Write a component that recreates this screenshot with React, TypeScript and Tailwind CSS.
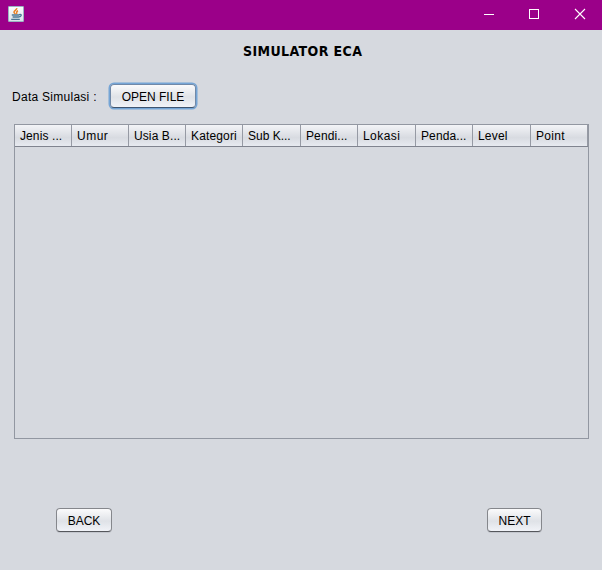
import React from "react";

const columns = [
  { label: "Jenis ...", style: "w-[57px] tracking-[0.1px]" },
  { label: "Umur", style: "w-[57px] tracking-[0.5px]" },
  { label: "Usia B...", style: "w-[57px] tracking-[0.1px]" },
  { label: "Kategori", style: "w-[57px] tracking-[0.15px]" },
  { label: "Sub K...", style: "w-[58px]" },
  { label: "Pendi...", style: "w-[57px] tracking-[0.1px]" },
  { label: "Lokasi", style: "w-[58px] tracking-[0.45px]" },
  { label: "Penda...", style: "w-[57px] tracking-[0.1px]" },
  { label: "Level", style: "w-[58px] tracking-[0.2px]" },
  { label: "Point", style: "w-[57px] tracking-[0.3px]" },
];

function JavaIcon() {
  return (
    <svg width="16" height="16" viewBox="0 0 16 16">
      <defs>
        <linearGradient id="tile" x1="0" y1="0" x2="0" y2="1">
          <stop offset="0" stopColor="#fdfdfd" />
          <stop offset="1" stopColor="#d9e2ea" />
        </linearGradient>
      </defs>
      <rect x=".5" y=".5" width="15" height="15" rx=".5" fill="url(#tile)" stroke="#9bb5c2" />
      <path d="M8.8 2.2C9 4 5.8 4.6 6 6.2c.1.9 1.2 1.2 1.2 2M10 4.7C7.6 5.6 9.4 6.3 8.5 8" fill="none" stroke="#ea8124" strokeWidth="1.5" />
      <path d="M3.8 9h7.6M4.6 11h6M3.2 13.3h8.6M11.2 8.6c3-.9 2.6 2.2-.6 2.4" fill="none" stroke="#4d7794" strokeWidth="1.3" />
    </svg>
  );
}

function Button({ label, className, focused = false }: { label: string; className: string; focused?: boolean }) {
  const frame = focused
    ? "border-[#7189a8] border-b-[#3f5570] shadow-[0_0_0_1.5px_#75a5d6]"
    : "border-[#85878c] border-b-[#55575c] shadow-[0_1px_0_#c3c6cd]";
  return (
    <button
      className={`flex items-center justify-center rounded-[4px] border bg-linear-to-b from-[#fbfbfc] via-[#dfe2e7] via-55% to-[#f1f3f8] ${frame} ${className}`}
    >
      {label}
    </button>
  );
}

export default function App() {
  return (
    <div className="flex h-[570px] w-[602px] flex-col overflow-hidden bg-[#d6d9df] font-['Liberation_Sans',Arial,sans-serif] text-[12px] leading-4 text-black">
      <header className="flex h-[30px] shrink-0 items-start justify-between bg-[#9b0089] pl-2">
        <div className="pt-[6px]">
          <JavaIcon />
        </div>
        <svg width="136" height="30" viewBox="466 0 136 30" fill="none" stroke="#fff" shapeRendering="crispEdges">
          <path d="M484 14.5h10" />
          <rect x="529.5" y="9.5" width="9" height="9" />
          <path d="M575 9l10 10M585 9l-10 10" shapeRendering="auto" strokeWidth="1.1" />
        </svg>
      </header>

      <h1 className="mt-[13px] h-4 pl-[243px] font-['DejaVu_Sans_Condensed','DejaVu_Sans',sans-serif] text-[14px] leading-4 font-bold tracking-[0.4px] whitespace-nowrap">
        SIMULATOR ECA
      </h1>

      <div className="mt-[25px] flex h-6 items-center pl-3">
        <span className="w-[98px] whitespace-nowrap pt-px tracking-[0.27px]">Data Simulasi :</span>
        <Button label="OPEN FILE" className="h-6 w-[86px] pt-px" focused />
      </div>

      <div className="mt-4 ml-[14px] h-[315px] w-[575px] border border-[#9297a1]">
        <div className="flex h-[22px] border-b border-[#80848f] bg-linear-to-b from-[#f3f4f7] via-[#d8dbe1] via-60% to-[#e7eaf0]">
          {columns.map(({ label, style }) => (
            <div key={label} className={`${style} shrink-0 overflow-hidden border-r border-[#969aa4] pt-[3px] pl-[5px] whitespace-nowrap`}>
              {label}
            </div>
          ))}
        </div>
      </div>

      <div className="mt-[69px] flex justify-between pr-[60px] pl-14">
        <Button label="BACK" className="h-6 w-14 pt-px" />
        <Button label="NEXT" className="h-6 w-[55px] pt-px" />
      </div>
    </div>
  );
}
